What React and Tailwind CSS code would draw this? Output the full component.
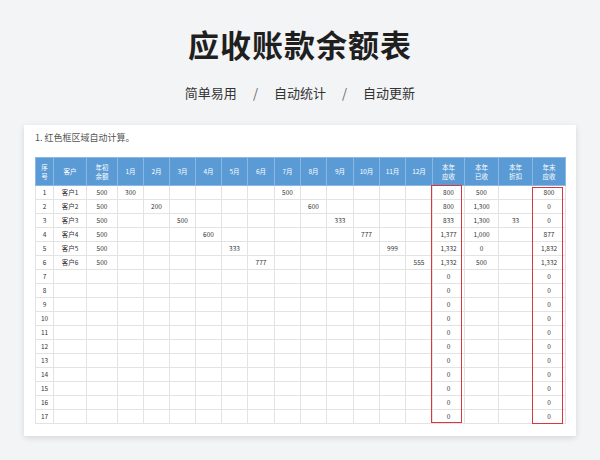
import React from "react";

const widths = [18, 33, 31, 26, 26, 26, 26, 26, 27, 26, 26, 27, 26, 26, 27, 32, 34, 34, 33];
const heads = ["序号", "客户", "年初余额", "1月", "2月", "3月", "4月", "5月", "6月", "7月", "8月", "9月", "10月", "11月", "12月", "本年应收", "本年已收", "本年折扣", "年末应收"];
const twoLine = { "序号": ["序", "号"], "年初余额": ["年初", "余额"], "本年应收": ["本年", "应收"], "本年已收": ["本年", "已收"], "本年折扣": ["本年", "折扣"], "年末应收": ["年末", "应收"] };

const data = [
  { m: { 0: "300", 6: "500" }, a: "800", b: "500", c: "", d: "800" },
  { m: { 1: "200", 7: "600" }, a: "800", b: "1,300", c: "", d: "0" },
  { m: { 2: "500", 8: "333" }, a: "833", b: "1,300", c: "33", d: "0" },
  { m: { 3: "600", 9: "777" }, a: "1,377", b: "1,000", c: "", d: "877" },
  { m: { 4: "333", 10: "999" }, a: "1,332", b: "0", c: "", d: "1,832" },
  { m: { 5: "777", 11: "555" }, a: "1,332", b: "500", c: "", d: "1,332" },
];

export default function App() {
  const rows = [];
  for (let i = 0; i < 17; i++) {
    const d = data[i];
    const cells = [String(i + 1), d ? `客户${i + 1}` : "", d ? "500" : ""];
    for (let k = 0; k < 12; k++) cells.push(d && d.m[k] ? d.m[k] : "");
    cells.push(d ? d.a : "0", d ? d.b : "", d ? d.c : "", d ? d.d : "0");
    rows.push(cells);
  }
  return (
    <div className="w-[600px] h-[460px] bg-[#f3f4f6] flex flex-col items-center" style={{ fontFamily: '"Noto Sans CJK SC", "Noto Sans", sans-serif' }}>
      <div className="mt-[24px] text-[31px] font-bold text-[#1f1f1f] leading-[40px] tracking-[1px]">应收账款余额表</div>
      <div className="mt-[20px] flex items-center gap-[16px] text-[13px] text-[#333] leading-[18px]">
        <span>简单易用</span><span className="text-[#666]">/</span><span>自动统计</span><span className="text-[#666]">/</span><span>自动更新</span>
      </div>
      <div className="mt-[23px] w-[552px] h-[311px] bg-white shadow-[0_2px_6px_rgba(0,0,0,0.12)] px-[11px] pt-[7px]">
        <div className="text-[9px] text-[#555] leading-[12px]">1. 红色框区域自动计算。</div>
        <div className="relative mt-[13px]">
          <table className="table-fixed border-collapse w-[530px]">
            <colgroup>{widths.map((w, i) => <col key={i} style={{ width: w }} />)}</colgroup>
            <thead>
              <tr className="h-[28px] bg-[#5b9bd5]">
                {heads.map((h) => (
                  <th key={h} className="border border-[#8bb8e3] text-white font-normal text-[6.5px] leading-[9px] p-0 text-center">
                    {twoLine[h] ? <>{twoLine[h][0]}<br />{twoLine[h][1]}</> : h}
                  </th>
                ))}
              </tr>
            </thead>
            <tbody>
              {rows.map((r, i) => (
                <tr key={i} className="h-[14px]">
                  {r.map((c, j) => (
                    <td key={j} className="border border-[#e3e3e3] text-[6.5px] text-[#333] text-center p-0 leading-[13px]">{c}</td>
                  ))}
                </tr>
              ))}
            </tbody>
          </table>
          <div className="absolute left-[396px] top-[28px] w-[31px] h-[238px] border-[1.5px] border-[#d9363e] pointer-events-none" />
          <div className="absolute left-[497px] top-[30px] w-[31px] h-[237px] border-[1.5px] border-[#d9363e] pointer-events-none" />
        </div>
      </div>
    </div>
  );
}
